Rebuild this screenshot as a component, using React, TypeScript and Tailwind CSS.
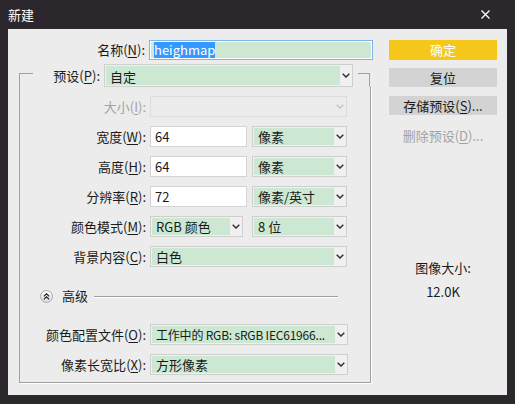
import React from "react";

const font = "font-['Noto_Sans_CJK_SC','Noto_Sans',sans-serif]";

function Chevron({ light }: { light?: boolean }) {
  return (
    <svg width="8" height="5" viewBox="0 0 8 5">
      <path d="M0.7 0.7 L4 4 L7.3 0.7" fill="none" stroke={light ? "#c4c4c4" : "#333"} strokeWidth="1.5" />
    </svg>
  );
}

function Mn({ text, k, tail = "):" }: { text: string; k: string; tail?: string }) {
  return (
    <>
      {text}(<span className="underline underline-offset-2">{k}</span>
      {tail}
    </>
  );
}

function Select({
  value,
  className = "",
  textClass = "text-[13px]",
  disabled,
  tall,
}: {
  value?: string;
  className?: string;
  textClass?: string;
  disabled?: boolean;
  tall?: boolean;
}) {
  return (
    <div
      className={`flex ${tall ? "h-[23px]" : "h-[21px]"} shrink-0 items-stretch border p-px pr-0 ${
        disabled ? "border-[#dcdcdc] bg-[#ececec]" : "border-[#cfcfcf] bg-[#f0f0f0]"
      } ${className}`}
    >
      <div
        className={`min-w-0 flex-1 overflow-hidden text-ellipsis whitespace-nowrap px-1 text-[#1a1a1a] ${textClass} ${
          tall ? "leading-[21px]" : "leading-[17px]"
        } ${disabled ? "" : "bg-[#cde8d2]"}`}
      >
        {value}
      </div>
      <div className="flex w-[12px] items-center justify-center">
        <Chevron light={disabled} />
      </div>
    </div>
  );
}

function Input({ value, className = "" }: { value: string; className?: string }) {
  return (
    <div
      className={`h-[21px] shrink-0 border border-[#d3d3d3] bg-white px-1 text-[13px] leading-[19px] text-[#1a1a1a] ${className}`}
    >
      {value}
    </div>
  );
}

function Row({ label, children, muted }: { label: React.ReactNode; children: React.ReactNode; muted?: boolean }) {
  return (
    <div className="flex h-[21px] items-center">
      <div className={`w-[126px] text-right text-[13px] leading-[21px] ${muted ? "text-[#a3a3a3]" : "text-[#1a1a1a]"}`}>
        {label}
      </div>
      <div className="ml-1 flex items-center">{children}</div>
    </div>
  );
}

export default function App() {
  return (
    <div className={`h-[404px] w-[515px] bg-[#2b272c] ${font}`}>
      {/* Title bar */}
      <div className="flex h-[29px] items-center justify-between pl-2 pr-[25px]">
        <span className="text-[13px] text-white">新建</span>
        <svg width="9" height="9" viewBox="0 0 9 9">
          <path d="M0.5 0.5 L8.5 8.5 M8.5 0.5 L0.5 8.5" stroke="#fff" strokeWidth="1.3" />
        </svg>
      </div>

      {/* Body */}
      <div className="mx-2 flex h-[366px] bg-[#ececec] pl-[11px] pr-[10px] pt-[11px]">
        {/* Left column */}
        <div className="flex w-[354px] flex-col">
          {/* Name */}
          <div className="flex h-5 items-center">
            <div className="w-[126px] text-right text-[13px] text-[#1a1a1a]">
              <Mn text="名称" k="N" />
            </div>
            <div className="ml-1 h-5 w-[224px] border border-[#7eb4ea] bg-white p-px">
              <div className="flex h-full items-center bg-[#cde8d2] pl-[3px]">
                <span className="bg-[#3399ff] text-[13px] leading-4 text-white">heighmap</span>
              </div>
            </div>
          </div>

          {/* Group header */}
          <div className="mt-1 flex w-[352px] items-start">
            <div className="mt-[9px] h-[14px] w-[14px] border-l border-t border-[#a0a0a0]" />
            <div className="flex items-center pr-[5px]">
              <div className="w-[67px] text-right text-[13px] leading-[23px] text-[#1a1a1a]">
                <Mn text="预设" k="P" />
              </div>
              <Select value="自定" tall className="ml-1 w-[249px]" />
            </div>
            <div className="mt-[9px] h-[14px] w-[12px] border-r border-t border-[#a0a0a0]" />
          </div>

          {/* Group body */}
          <div className="flex w-[352px] flex-col border-x border-b border-[#a0a0a0] pb-[7px] pt-[9px] shadow-[1px_1px_0_#ffffff]">
            <div className="flex flex-col gap-[9px]">
              <Row label={<Mn text="大小" k="I" />} muted>
                <Select disabled className="w-[197px]" />
              </Row>
              <Row label={<Mn text="宽度" k="W" />}>
                <Input value="64" className="w-[97px]" />
                <Select value="像素" className="ml-[5px] w-[95px]" />
              </Row>
              <Row label={<Mn text="高度" k="H" />}>
                <Input value="64" className="w-[97px]" />
                <Select value="像素" className="ml-[5px] w-[95px]" />
              </Row>
              <Row label={<Mn text="分辨率" k="R" />}>
                <Input value="72" className="w-[97px]" />
                <Select value="像素/英寸" className="ml-[5px] w-[95px]" />
              </Row>
              <Row label={<Mn text="颜色模式" k="M" />}>
                <Select value="RGB 颜色" className="w-[93px]" />
                <Select value="8 位" className="ml-[9px] w-[95px]" />
              </Row>
              <Row label={<Mn text="背景内容" k="C" />}>
                <Select value="白色" className="w-[197px]" />
              </Row>
            </div>

            {/* Advanced */}
            <div className="mt-[19px] flex h-5 items-center pl-[20px] pr-[32px]">
              <div className="flex h-[13px] w-[13px] items-center justify-center rounded-full border border-[#a8a8a8] bg-gradient-to-b from-white to-[#dcdcdc]">
                <svg width="7" height="7" viewBox="0 0 7 7">
                  <path d="M0.8 3.4 L3.5 0.8 L6.2 3.4 M0.8 6.4 L3.5 3.8 L6.2 6.4" fill="none" stroke="#222" strokeWidth="1.2" />
                </svg>
              </div>
              <span className="ml-[9px] text-[13px] text-[#1a1a1a]">高级</span>
              <div className="ml-[6px] h-px flex-1 bg-[#a0a0a0] shadow-[0_1px_0_#ffffff]" />
            </div>

            <div className="mt-[18px] flex flex-col gap-[9px]">
              <Row label={<Mn text="颜色配置文件" k="O" />}>
                <Select
                  value="工作中的 RGB: sRGB IEC61966..."
                  textClass="text-[12px] tracking-[-0.2px]"
                  className="w-[198px]"
                />
              </Row>
              <Row label={<Mn text="像素长宽比" k="X" />}>
                <Select value="方形像素" className="w-[198px]" />
              </Row>
            </div>
          </div>
        </div>

        {/* Right column */}
        <div className="ml-4 flex w-[110px] flex-col text-[13px]">
          <div className="flex h-5 items-center justify-center bg-[#f5c71a] text-white">确定</div>
          <div className="mt-2 flex h-[19px] items-center justify-center bg-[#d3d3d3] text-[#1a1a1a]">复位</div>
          <div className="mt-[9px] flex h-[19px] items-center justify-center bg-[#d3d3d3] text-[#1a1a1a]">
            <Mn text="存储预设" k="S" tail=")..." />
          </div>
          <div className="mt-[11px] flex h-[19px] items-center justify-center text-[#a3a3a3]">
            <Mn text="删除预设" k="D" tail=")..." />
          </div>
          <div className="mt-[113px] text-center leading-5 text-[#1a1a1a]">图像大小:</div>
          <div className="mt-1 text-center leading-5 text-[#1a1a1a]">12.0K</div>
        </div>
      </div>
    </div>
  );
}
